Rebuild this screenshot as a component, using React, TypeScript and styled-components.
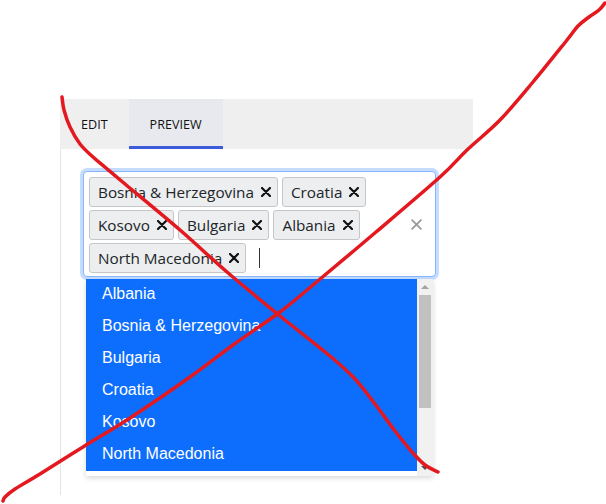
import React from "react"
import styled, { createGlobalStyle } from "styled-components"

const GlobalStyle = createGlobalStyle`
  html, body {
    margin: 0;
    padding: 0;
    background: #fff;
  }
  body {
    font-family: "Open Sans", "Noto Sans", sans-serif;
    color: #212529;
  }
`

const Page = styled.div`
  position: relative;
  width: 606px;
  height: 504px;
  padding: 99px 0 0 60px;
  box-sizing: border-box;
  overflow: hidden;
`

const Panel = styled.div`
  width: 413px;
  height: 396px;
  display: flex;
  flex-direction: column;
`

const TabBar = styled.div`
  display: flex;
  height: 50px;
  background: #efefef;
`

const Tab = styled.button<{ $active?: boolean }>`
  box-sizing: border-box;
  height: 50px;
  padding: 3px 21px 0;
  border: none;
  border-bottom: 3px solid ${(p) => (p.$active ? "#3d5bd9" : "transparent")};
  background: ${(p) => (p.$active ? "#e7e9ee" : "transparent")};
  font-family: "Open Sans", sans-serif;
  font-size: 12.6px;
  font-weight: 500;
  color: #111;
  text-transform: uppercase;
  cursor: pointer;
`

const Body = styled.div`
  flex: 1;
  border-left: 1px solid #e4e4e4;
  padding: 22px 37px 0 22px;
`

const SelectWrap = styled.div`
  position: relative;
`

const Control = styled.div`
  display: flex;
  border: 1px solid #86b7fe;
  border-radius: 4px;
  box-shadow: 0 0 0 3px #c6dcfe;
  background: #fff;
`

const Values = styled.div`
  flex: 1;
  display: flex;
  flex-wrap: wrap;
  align-items: center;
  gap: 3px 4px;
  padding: 5px 0 3px 5px;
`

const Tag = styled.span`
  display: inline-flex;
  align-items: center;
  gap: 7px;
  box-sizing: border-box;
  height: 30px;
  padding: 0 6px 0 8px;
  border: 1px solid #c4c6c8;
  border-radius: 3px;
  background: #eceeef;
  font-size: 15.3px;
  color: #212529;
  white-space: nowrap;
`

const Caret = styled.span`
  display: inline-block;
  width: 1px;
  height: 20px;
  margin-left: 9px;
  background: #333;
`

const Clear = styled.div`
  width: 30px;
  display: flex;
  align-items: center;
  justify-content: center;
  padding-right: 4px;
`

const Menu = styled.div`
  position: absolute;
  top: calc(100% + 2px);
  left: 3px;
  right: 3px;
  height: 197px;
  display: flex;
  background: #fff;
  box-shadow: 0 2px 5px rgba(0, 0, 0, 0.16);
`

const OptionList = styled.div`
  flex: 1;
  overflow: hidden;
`

const Option = styled.div<{ $selected?: boolean }>`
  height: 32px;
  line-height: 30px;
  padding: 0 16px;
  font-family: "Liberation Sans", Arial, sans-serif;
  font-size: 16px;
  background: ${(p) => (p.$selected ? "#0d6efd" : "#fff")};
  color: ${(p) => (p.$selected ? "#fff" : "#212529")};
`

const ScrollTrack = styled.div`
  width: 16px;
  display: flex;
  flex-direction: column;
  background: #f1f1f1;
`

const ScrollButton = styled.div<{ $down?: boolean }>`
  height: 16px;
  display: flex;
  align-items: center;
  justify-content: center;

  &::before {
    content: "";
    border-left: 4px solid transparent;
    border-right: 4px solid transparent;
    ${(p) => (p.$down ? "border-top: 4px solid #505050;" : "border-bottom: 4px solid #a3a3a3;")}
  }
`

const Thumb = styled.div`
  height: 113px;
  margin: 0 2px;
  background: #c1c1c1;
`

const Spacer = styled.div`
  flex: 1;
`

const Scribble = styled.svg`
  position: absolute;
  top: 0;
  left: 0;
  pointer-events: none;
`

const countries = ["Bosnia & Herzegovina", "Croatia", "Kosovo", "Bulgaria", "Albania", "North Macedonia"]
const options = ["Albania", "Bosnia & Herzegovina", "Bulgaria", "Croatia", "Kosovo", "North Macedonia"]

const Cross = ({ size, color, width }: { size: number; color: string; width: number }) => (
  <svg width={size} height={size} viewBox="0 0 10 10">
    <path d="M1 1 L9 9 M9 1 L1 9" stroke={color} strokeWidth={width} strokeLinecap="round" />
  </svg>
)

// catmull-rom through the points, as cubic beziers
const smooth = (pts: number[][]) => {
  let d = `M${pts[0][0]} ${pts[0][1]}`
  for (let i = 0; i < pts.length - 1; i++) {
    const p0 = pts[i - 1] || pts[i]
    const p1 = pts[i]
    const p2 = pts[i + 1]
    const p3 = pts[i + 2] || p2
    const c1 = [p1[0] + (p2[0] - p0[0]) / 6, p1[1] + (p2[1] - p0[1]) / 6]
    const c2 = [p2[0] - (p3[0] - p1[0]) / 6, p2[1] - (p3[1] - p1[1]) / 6]
    d += ` C${c1[0]} ${c1[1]} ${c2[0]} ${c2[1]} ${p2[0]} ${p2[1]}`
  }
  return d
}

const strokeA = [
  [62, 97], [64, 110], [70, 127], [80, 144], [93, 157], [106, 168], [125, 184], [180, 230],
  [227, 272], [280, 316], [330, 356], [355, 379], [375, 404], [395, 431], [412, 452], [425, 465], [438, 472],
]
const strokeB = [
  [605, 3], [599, 10], [589, 17], [578, 26], [567, 40], [533, 82], [500, 120], [467, 150], [440, 177],
  [376, 232], [313, 285], [280, 312], [233, 345], [190, 377], [130, 418], [83, 447], [40, 474],
  [15, 489], [5, 497], [3, 501],
]

export default function App() {
  return (
    <>
      <GlobalStyle />
      <Page>
        <Panel>
          <TabBar>
            <Tab>Edit</Tab>
            <Tab $active>Preview</Tab>
          </TabBar>
          <Body>
            <SelectWrap>
              <Control>
                <Values>
                  {countries.map((c) => (
                    <Tag key={c}>
                      {c}
                      <Cross size={10} color="#111" width={2.2} />
                    </Tag>
                  ))}
                  <Caret />
                </Values>
                <Clear>
                  <Cross size={11} color="#9a9a9a" width={1.6} />
                </Clear>
              </Control>
              <Menu>
                <OptionList>
                  {options.map((o) => (
                    <Option key={o} $selected>
                      {o}
                    </Option>
                  ))}
                </OptionList>
                <ScrollTrack>
                  <ScrollButton />
                  <Thumb />
                  <Spacer />
                  <ScrollButton $down />
                </ScrollTrack>
              </Menu>
            </SelectWrap>
          </Body>
        </Panel>
        <Scribble width={606} height={504} viewBox="0 0 606 504">
          <path d={smooth(strokeA)} fill="none" stroke="#e3191f" strokeWidth={3.5} strokeLinecap="round" strokeLinejoin="round" />
          <path d={smooth(strokeB)} fill="none" stroke="#e3191f" strokeWidth={3.5} strokeLinecap="round" strokeLinejoin="round" />
        </Scribble>
      </Page>
    </>
  )
}
